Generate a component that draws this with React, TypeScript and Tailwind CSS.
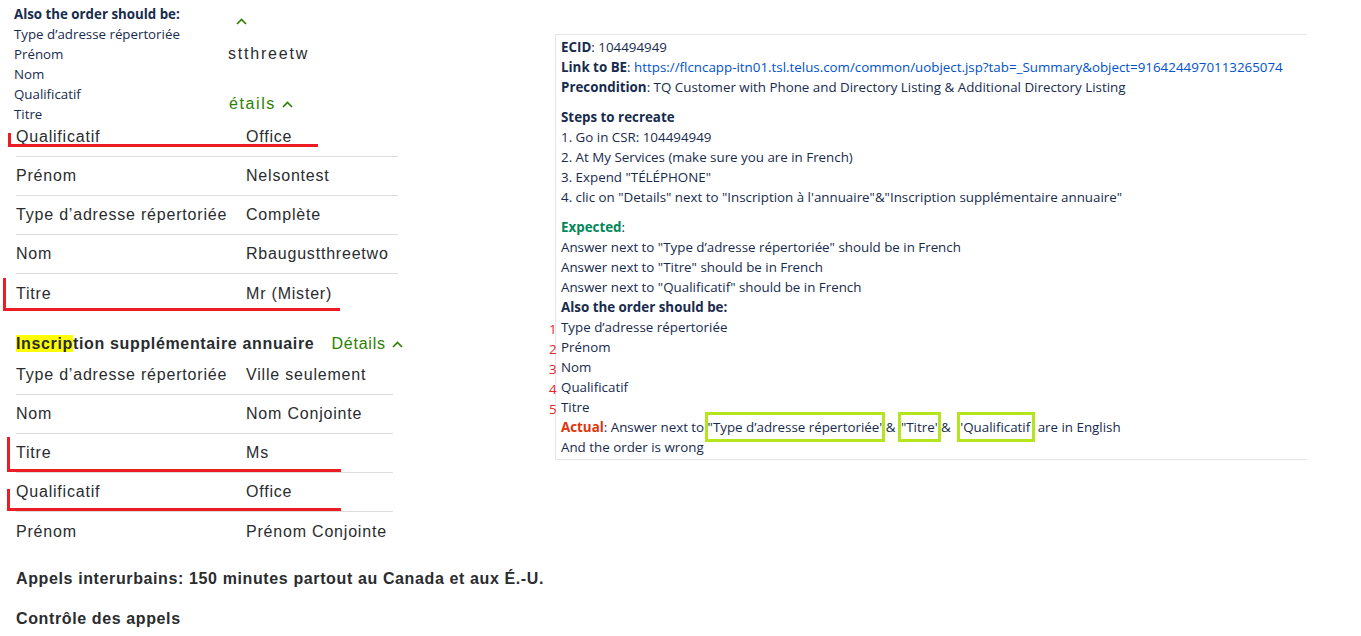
const leftFont = { fontFamily: '"Liberation Sans", Arial, sans-serif' };
const panelFont = { fontFamily: '"Open Sans", "Noto Sans", sans-serif' };

function Chevron({ className = "" }: { className?: string }) {
  return (
    <svg width="11" height="7" viewBox="0 0 11 7" fill="none" className={className}>
      <path d="M1 6l4.5-4.5L10 6" stroke="#2b8000" strokeWidth="1.6" />
    </svg>
  );
}

type Row = { label: string; value: string; mark?: string };

function RedMark({ className }: { className: string }) {
  return <div className={`absolute border-l-[3px] border-b-[3px] border-[#ed1c24] ${className}`} />;
}

function Rows({ rows, width }: { rows: Row[]; width: string }) {
  return (
    <div className={width}>
      {rows.map((r, i) => (
        <div
          key={r.label}
          className={`relative flex items-center h-[39px] ${i < rows.length - 1 ? "border-b border-[#dcdcdc]" : ""}`}
        >
          <span className="w-[230px] shrink-0">{r.label}</span>
          <span>{r.value}</span>
          {r.mark && <RedMark className={r.mark} />}
        </div>
      ))}
    </div>
  );
}

export default function App() {
  const upper: Row[] = [
    { label: "Qualificatif", value: "Office", mark: "-left-[8px] top-[15px] w-[310px] h-[14px]" },
    { label: "Prénom", value: "Nelsontest" },
    { label: "Type d’adresse répertoriée", value: "Complète" },
    { label: "Nom", value: "Rbaugustthreetwo" },
    { label: "Titre", value: "Mr (Mister)", mark: "-left-[13px] top-[4px] w-[337px] h-[33px]" },
  ];
  const lower: Row[] = [
    { label: "Type d’adresse répertoriée", value: "Ville seulement" },
    { label: "Nom", value: "Nom Conjointe" },
    { label: "Titre", value: "Ms", mark: "-left-[9px] top-[3px] w-[334px] h-[35px]" },
    { label: "Qualificatif", value: "Office", mark: "-left-[9px] top-[16px] w-[334px] h-[22px]" },
    { label: "Prénom", value: "Prénom Conjointe" },
  ];
  const order = ["Type d’adresse répertoriée", "Prénom", "Nom", "Qualificatif", "Titre"];

  return (
    <div className="w-[1361px] h-[636px] overflow-hidden bg-white flex">
      {/* ── Left: service details ── */}
      <div className="w-[555px] shrink-0 text-[16px] text-[#2a2c2e] tracking-[0.8px]" style={leftFont}>
        {/* pasted snippet over the top */}
        <div className="flex h-[118px]">
          <div
            className="w-[226px] shrink-0 bg-white pl-[14px] pt-[4px] text-[13.3px] leading-[20px] text-[#172b4d] tracking-normal z-10"
            style={panelFont}
          >
            <div className="font-bold">Also the order should be:</div>
            {order.map((o) => (
              <div key={o}>{o}</div>
            ))}
          </div>
          <div className="flex flex-col">
            <div className="h-[34px] flex items-center pl-[10px] pt-[8px]">
              <Chevron />
            </div>
            <div className="h-[40px] flex items-center pl-[2px] tracking-[1.8px]">stthreetw</div>
            <div className="h-[42px] flex items-center gap-[6px] pl-[3px] pt-[18px] text-[#2b8000] tracking-[1.6px]">
              étails
              <Chevron />
            </div>
          </div>
        </div>

        <div className="pl-4">
          <Rows rows={upper} width="w-[382px]" />

          <div className="mt-[19px] h-6 flex items-center font-bold tracking-[0.65px]">
            <span>
              <span className="bg-[#ffff00]">Inscrip</span>tion supplémentaire annuaire
            </span>
            <span className="ml-[17px] flex items-center gap-[6px] font-normal text-[#2b8000] tracking-[0.8px]">
              Détails
              <Chevron />
            </span>
          </div>

          <Rows rows={lower} width="w-[377px]" />

          <div className="mt-4 leading-6 font-bold tracking-[0.62px]">
            Appels interurbains: 150 minutes partout au Canada et aux É.-U.
          </div>
          <div className="mt-4 leading-6 font-bold tracking-[0.62px]">Contrôle des appels</div>
        </div>
      </div>

      {/* ── Right: ticket description ── */}
      <div className="pt-[34px]">
        <div
          className="w-[752px] border-t border-l border-b border-[#e6e6e6] pl-[5px] pt-[2px] pb-[2px] text-[13.35px] leading-[20px] text-[#172b4d]"
          style={panelFont}
        >
          <div>
            <b>ECID</b>: 104494949
          </div>
          <div>
            <b>Link to BE</b>:{" "}
            <span className="text-[#0052cc]">
              https://flcncapp-itn01.tsl.telus.com/common/uobject.jsp?tab=_Summary&amp;object=9164244970113265074
            </span>
          </div>
          <div>
            <b>Precondition</b>: TQ Customer with Phone and Directory Listing &amp; Additional Directory Listing
          </div>

          <div className="mt-[10px] font-bold">Steps to recreate</div>
          <div>1. Go in CSR: 104494949</div>
          <div>2. At My Services (make sure you are in French)</div>
          <div>3. Expend "TÉLÉPHONE"</div>
          <div>4. clic on "Details" next to "Inscription à l'annuaire"&amp;"Inscription supplémentaire annuaire"</div>

          <div className="mt-[10px]">
            <b className="text-[#00875a]">Expected</b>:
          </div>
          <div>Answer next to "Type d’adresse répertoriée" should be in French</div>
          <div>Answer next to "Titre" should be in French</div>
          <div>Answer next to "Qualificatif" should be in French</div>
          <div className="font-bold">Also the order should be:</div>
          {order.map((o, i) => (
            <div key={o} className="relative">
              <span className="absolute -left-[12px] top-[2px] text-[#e8262b]">{i + 1}</span>
              {o}
            </div>
          ))}
          <div>
            <b className="text-[#de350b]">Actual</b>: Answer next to{" "}
            <span className="outline-3 outline-[#b5e61d] py-[3px]">"Type d’adresse répertoriée'</span> &amp;{" "}
            <span className="outline-3 outline-[#b5e61d] py-[3px] ml-[2px]">"Titre'</span> &amp;{" "}
            <span className="outline-3 outline-[#b5e61d] py-[3px] pr-[2px] ml-[6px]">'Qualificatif</span>{" "}
            <span className="ml-[2px]">are in English</span>
          </div>
          <div>And the order is wrong</div>
        </div>
      </div>
    </div>
  );
}
